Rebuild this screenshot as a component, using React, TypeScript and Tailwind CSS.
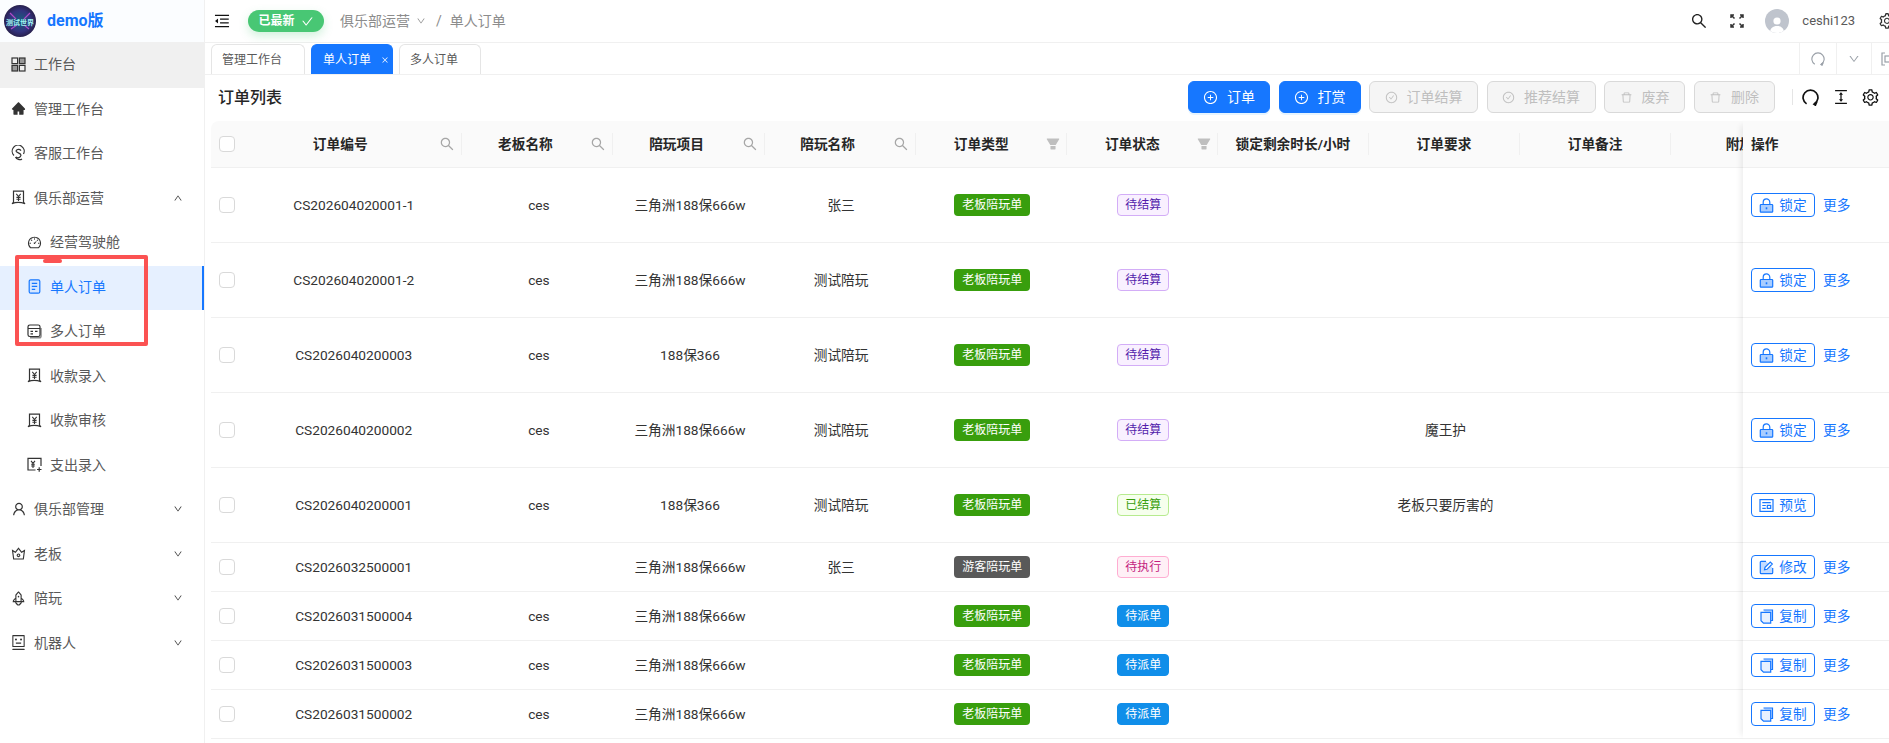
import type { ReactNode } from "react";
import {
  AiFillFilter,
  AiFillHome,
  AiOutlineCheck,
  AiOutlineCheckCircle,
  AiOutlineClose,
  AiOutlineColumnHeight,
  AiOutlineCrown,
  AiOutlineDashboard,
  AiOutlineDelete,
  AiOutlineDown,
  AiOutlineMenuFold,
  AiOutlinePlusCircle,
  AiOutlineRobot,
  AiOutlineRocket,
  AiOutlineSearch,
  AiOutlineSetting,
  AiOutlineUp,
  AiOutlineUser,
} from "react-icons/ai";

const font = "font-['Roboto','Noto_Sans_CJK_SC',sans-serif]";

const GridIcon = () => (
  <svg width="15" height="15" viewBox="0 0 15 15" fill="none" stroke="#333" strokeWidth="1.2">
    <rect x="1" y="1" width="5.6" height="5.6" />
    <rect x="8.4" y="1" width="5.6" height="5.6" fill="#999" />
    <rect x="1" y="8.4" width="5.6" height="5.6" fill="#999" />
    <rect x="8.4" y="8.4" width="5.6" height="5.6" />
  </svg>
);

const ServiceIcon = () => (
  <svg width="15" height="16" viewBox="0 0 15 16" fill="none" stroke="#333" strokeWidth="1.2">
    <path d="M3 10.5A6 6 0 1 1 12.5 9" />
    <path d="M10 5.6A3 3 0 0 0 5 6c0 2 5 1.800 5 4.200a3 3 0 0 1-5 1.800" />
    <path d="M4.500 12c1 2.500 4.500 3.500 6.500 2" />
  </svg>
);

const EnvelopeIcon = () => (
  <svg width="15" height="15" viewBox="0 0 15 15" fill="none" stroke="#333" strokeWidth="1.2">
    <path d="M2.500 1.200h10v11l1.500 1.600c-4-1.600-9.500-1.600-13 0l1.500-1.600z" />
    <path d="M5.300 3.800 7.500 6.500 9.700 3.800M7.500 6.500V11M5.400 7.400h4.200M5.400 9.200h4.200" strokeWidth="1.100" />
  </svg>
);

const PayIcon = () => (
  <svg width="15" height="15" viewBox="0 0 15 15" fill="none" stroke="#333" strokeWidth="1.2">
    <path d="M8.500 13H1V1.300h13V9" />
    <path d="M4 3.800 6 6.300 8 3.800M6 6.300V11M4.200 7.300h3.600M4.200 9h3.600" strokeWidth="1.100" />
    <path d="M10 12.500h4.500M12.200 10.300v4.400" />
  </svg>
);

const FileIcon = () => (
  <svg width="15" height="15" viewBox="0 0 15 15" fill="#d5e6ff" stroke="#1677ff" strokeWidth="1.200">
    <rect x="2.200" y="0.800" width="10.600" height="13.400" rx="1.500" />
    <path d="M4.800 4.300h5.400M4.800 7.300h5.400M4.800 10.300h3.400" fill="none" />
  </svg>
);

const ProfileIcon = () => (
  <svg width="15" height="15" viewBox="0 0 15 15" fill="none" stroke="#333" strokeWidth="1.200">
    <path d="M3 13.800h9.500a1.500 1.500 0 0 0 1.500-1.500V4" stroke="#888" strokeWidth="1.500" />
    <rect x="1" y="1" width="12" height="11.500" rx="1.800" fill="#fff" />
    <path d="M1 4.500h12M3.500 7.300h2.500M8 7.300h2.500M3.500 9.800h2.500" />
  </svg>
);

const ReloadIcon = ({ size, color, width }: { size: number; color: string; width: number }) => (
  <svg width={size} height={size} viewBox="0 0 16 16" fill="none" stroke={color} strokeWidth={width}>
    <path d="M4.300 14A7 7 0 1 1 11.700 14" />
    <path d="M13.900 12.200 11.300 14.300 12.600 15.200z" fill={color} />
  </svg>
);

const FullIcon = () => (
  <svg width="14" height="14" viewBox="0 0 14 14" fill="none" stroke="#333" strokeWidth="1.500">
    <path d="M1 4V1h3M1 1l3.500 3.500M13 4V1h-3M13 1 9.500 4.500M1 10v3h3M1 13l3.500-3.500M13 10v3h-3M13 13 9.500 9.500" />
  </svg>
);

const LockIcon = () => (
  <svg width="15" height="15" viewBox="0 0 15 15" fill="none" stroke="#1677ff" strokeWidth="1.200">
    <path d="M4.200 6.500V4.200a3.300 3.300 0 0 1 6.600 0v2.300" />
    <rect x="1.300" y="6.500" width="12.400" height="7.700" rx="0.800" fill="#a9cdff" />
    <path d="M7.500 9.300v2" strokeWidth="1.600" />
  </svg>
);

const PreviewIcon = () => (
  <svg width="15" height="15" viewBox="0 0 15 15" fill="none" stroke="#1677ff" strokeWidth="1.200">
    <rect x="1" y="1.600" width="13" height="11.800" />
    <path d="M3.300 4.600h8.400M3.300 7.500h3.500M3.300 10.400h3.500" />
    <rect x="8.300" y="7.400" width="3.400" height="3" />
  </svg>
);

const EditIcon = () => (
  <svg width="15" height="15" viewBox="0 0 15 15" fill="none" stroke="#1677ff" strokeWidth="1.200">
    <path d="M7 1.300H2.300a1 1 0 0 0-1 1v10.400a1 1 0 0 0 1 1h10.400a1 1 0 0 0 1-1V8" fill="#c4dcff" />
    <path d="M5.500 9.800 6 7.400 11.300 2 13.300 4 8 9.300z" fill="#fff" />
  </svg>
);

const CopyIcon = () => (
  <svg width="15" height="15" viewBox="0 0 15 15" fill="none" stroke="#1677ff" strokeWidth="1.200">
    <path d="M4.500 1h9v10.500h-1.800" fill="#c4dcff" />
    <path d="M4.500 3.300h7.200v10.900H4.500L2 11.700V3.300z" fill="#e8f1ff" />
  </svg>
);

const Logo = () => (
  <svg width="32" height="32" viewBox="0 0 32 32">
    <defs>
      <radialGradient id="logo-bg" cx="0.500" cy="0.500" r="0.550">
        <stop offset="0" stopColor="#16607c" />
        <stop offset="0.600" stopColor="#33337f" />
        <stop offset="1" stopColor="#241a3e" />
      </radialGradient>
    </defs>
    <circle cx="16" cy="16" r="16" fill="url(#logo-bg)" />
    <path d="M6 8 12 14M26 8l-6 6M7 24l6-4M25 24l-5-4" stroke="#b04bc8" strokeWidth="1.200" />
    <text x="16" y="20" textAnchor="middle" fontSize="7" fontWeight="700" fill="#9ff0ef" fontFamily="'Noto Sans CJK SC',sans-serif">
      测试世界
    </text>
  </svg>
);

type MenuItem = { label: string; icon: ReactNode; sub?: boolean; arrow?: "up" | "down"; active?: boolean; hover?: boolean };

const menu: MenuItem[] = [
  { label: "工作台", icon: <GridIcon />, hover: true },
  { label: "管理工作台", icon: <AiFillHome size={15} color="#333" /> },
  { label: "客服工作台", icon: <ServiceIcon /> },
  { label: "俱乐部运营", icon: <EnvelopeIcon />, arrow: "up" },
  { label: "经营驾驶舱", icon: <AiOutlineDashboard size={15} color="#333" />, sub: true },
  { label: "单人订单", icon: <FileIcon />, sub: true, active: true },
  { label: "多人订单", icon: <ProfileIcon />, sub: true },
  { label: "收款录入", icon: <EnvelopeIcon />, sub: true },
  { label: "收款审核", icon: <EnvelopeIcon />, sub: true },
  { label: "支出录入", icon: <PayIcon />, sub: true },
  { label: "俱乐部管理", icon: <AiOutlineUser size={16} color="#333" className="shrink-0" />, arrow: "down" },
  { label: "老板", icon: <AiOutlineCrown size={17} color="#333" className="shrink-0" />, arrow: "down" },
  { label: "陪玩", icon: <AiOutlineRocket size={17} color="#333" className="shrink-0" />, arrow: "down" },
  { label: "机器人", icon: <AiOutlineRobot size={17} color="#333" className="shrink-0" />, arrow: "down" },
];

const Sidebar = () => (
  <aside className="relative w-[205px] shrink-0 border-r border-[#f0f0f0] bg-white">
    <div className="flex h-[43px] items-center gap-[11px] border-b border-[#f0f0f0] bg-[#fbfdff] pl-1">
      <Logo />
      <span className="text-base font-bold text-[#1677ff]">demo版</span>
    </div>
    {menu.map((item) => (
      <div
        key={item.label}
        className={`flex h-[44.500px] items-center pb-[2px] text-sm ${item.sub ? "pl-[27px]" : "pl-[11px]"} ${
          item.active ? "border-r-2 border-[#1677ff] bg-[#e6f0ff] text-[#1677ff]" : "text-[#595959]"
        } ${item.hover ? "bg-[#f0f0f0]" : ""}`}
      >
        <span className="flex w-[15px] justify-center">{item.icon}</span>
        <span className="ml-[8px]">{item.label}</span>
        {item.arrow === "up" && <AiOutlineUp size={10} color="#333" className="ml-auto mr-[21px]" />}
        {item.arrow === "down" && <AiOutlineDown size={10} color="#333" className="ml-auto mr-[21px]" />}
      </div>
    ))}
    {/* hand-drawn mark on the screenshot */}
    <div className="absolute left-[15px] top-[255px] h-[91px] w-[133px] rounded-[2px] border-4 border-[#fb5252]" />
    <div className="absolute left-[43px] top-[259px] h-[4px] w-[19px] rounded-full bg-[#fb5252]" />
  </aside>
);

const Header = () => (
  <header className="flex h-[43px] items-center border-b border-[#f0f0f0] bg-white">
    <AiOutlineMenuFold size={18} color="#111" className="ml-[8px]" />
    <span className="ml-[17px] flex h-[22px] w-[76px] items-center justify-center gap-[6px] rounded-full bg-[#48c774] text-xs font-bold text-white shadow-[0_4px_10px_rgba(72,199,116,0.25)]">
      已最新
      <AiOutlineCheck size={13} />
    </span>
    <span className="ml-[16px] text-sm text-[#8c8c8c]">俱乐部运营</span>
    <AiOutlineDown size={10} color="#8c8c8c" className="ml-[6px]" />
    <span className="ml-[10px] text-sm text-[#8c8c8c]">/</span>
    <span className="ml-[8px] text-sm text-[#8c8c8c]">单人订单</span>
    <div className="ml-auto flex items-center">
      <AiOutlineSearch size={18} color="#222" />
      <span className="ml-[22px]">
        <FullIcon />
      </span>
      <span className="ml-[21px] flex h-6 w-6 items-end justify-center overflow-hidden rounded-full bg-[#bfc4cd]">
        <svg width="14" height="17" viewBox="0 0 14 17" fill="#fff">
          <circle cx="7" cy="5" r="3.600" />
          <path d="M0 17c0-5 3-7 7-7s7 2 7 7z" />
        </svg>
      </span>
      <span className="ml-[13px] text-[13px] text-[#595959]">ceshi123</span>
      <AiOutlineSetting size={18} color="#333" className="ml-[23px] mr-[-7px]" />
    </div>
  </header>
);

const tabs = [
  { label: "管理工作台", w: "w-[94px] pl-[10px]" },
  { label: "单人订单", w: "w-[82px] pl-[11px]", active: true },
  { label: "多人订单", w: "w-[82px] pl-[10px]" },
];

const TabBar = () => (
  <div className="flex h-[32px] items-end justify-between border-b border-[#f0f0f0] bg-white pl-[6px]">
    <div className="flex gap-[6px]">
      {tabs.map((t) => (
        <div
          key={t.label}
          className={`flex h-[30px] items-center rounded-t-[6px] border border-b-0 text-xs ${t.w} ${
            t.active ? "border-[#1677ff] bg-[#1677ff] text-white" : "border-[#e5e5e5] bg-white text-[#595959]"
          }`}
        >
          {t.label}
          {t.active && <AiOutlineClose size={8} className="ml-[10px]" />}
        </div>
      ))}
    </div>
    <div className="flex h-full items-center">
      <span className="flex h-full w-[37px] items-center justify-center border-l border-[#f0f0f0]">
        <ReloadIcon size={14} color="#9aa0a8" width={1.300} />
      </span>
      <span className="flex h-full w-[35px] items-center justify-center border-l border-[#f0f0f0]">
        <AiOutlineDown size={12} color="#9aa0a8" />
      </span>
      <span className="flex h-full w-[18px] items-center overflow-hidden border-l border-[#f0f0f0] pl-[9px]">
        <svg width="14" height="14" viewBox="0 0 14 14" fill="none" stroke="#9aa0a8" strokeWidth="1.200" className="shrink-0">
          <path d="M4 1H1v12h3M10 1h3v12h-3" />
          <rect x="4" y="4" width="6" height="6" />
        </svg>
      </span>
    </div>
  </div>
);

const ActionButton = ({ label, icon, w, on }: { label: string; icon: ReactNode; w: string; on?: boolean }) => (
  <button
    className={`flex h-8 items-center justify-center gap-[9px] rounded-[6px] border text-sm ${w} ${
      on
        ? "border-[#1677ff] bg-[#1677ff] text-white shadow-[0_2px_0_rgba(5,145,255,0.1)]"
        : "border-[#d9d9d9] bg-[#f5f5f5] text-[#bfbfbf]"
    }`}
  >
    {icon}
    {label}
  </button>
);

const TitleBar = () => (
  <div className="flex h-[46px] items-start justify-between pl-[13px] pr-[9px] pt-[6px]">
    <h2 className="mt-[5px] text-base font-medium text-[#262626]">订单列表</h2>
    <div className="flex items-center">
      <div className="flex items-center gap-[8.500px]">
        <ActionButton on w="w-[82px]" label="订单" icon={<AiOutlinePlusCircle size={15} />} />
        <ActionButton on w="w-[82px]" label="打赏" icon={<AiOutlinePlusCircle size={15} />} />
        <ActionButton w="w-[109px]" label="订单结算" icon={<AiOutlineCheckCircle size={13} />} />
        <ActionButton w="w-[109px]" label="推荐结算" icon={<AiOutlineCheckCircle size={13} />} />
        <ActionButton w="w-[81px]" label="废弃" icon={<AiOutlineDelete size={13} />} />
        <ActionButton w="w-[81px]" label="删除" icon={<AiOutlineDelete size={13} />} />
      </div>
      <span className="ml-[17px] h-[16px] w-px bg-[#e5e5e5]" />
      <span className="ml-[9px]">
        <ReloadIcon size={17} color="#111" width={1.600} />
      </span>
      <AiOutlineColumnHeight size={18} color="#111" className="ml-[13.500px]" />
      <AiOutlineSetting size={19} color="#111" className="ml-[11px]" />
    </div>
  </div>
);

const columns: { label: string; mark?: "search" | "filter" }[] = [
  { label: "老板名称", mark: "search" },
  { label: "陪玩项目", mark: "search" },
  { label: "陪玩名称", mark: "search" },
  { label: "订单类型", mark: "filter" },
  { label: "订单状态", mark: "filter" },
  { label: "锁定剩余时长/小时" },
  { label: "订单要求" },
  { label: "订单备注" },
  { label: "附加费" },
];

type Op = "锁定" | "预览" | "修改" | "复制";
type Status = "待结算" | "已结算" | "待执行" | "待派单";
type Row = {
  id: string;
  boss: string;
  item: string;
  player: string;
  type: string;
  status: Status;
  demand?: string;
  op: Op;
  tall?: boolean;
};

const rows: Row[] = [
  { id: "CS202604020001-1", boss: "ces", item: "三角洲188保666w", player: "张三", type: "老板陪玩单", status: "待结算", op: "锁定", tall: true },
  { id: "CS202604020001-2", boss: "ces", item: "三角洲188保666w", player: "测试陪玩", type: "老板陪玩单", status: "待结算", op: "锁定", tall: true },
  { id: "CS2026040200003", boss: "ces", item: "188保366", player: "测试陪玩", type: "老板陪玩单", status: "待结算", op: "锁定", tall: true },
  { id: "CS2026040200002", boss: "ces", item: "三角洲188保666w", player: "测试陪玩", type: "老板陪玩单", status: "待结算", demand: "魔王护", op: "锁定", tall: true },
  { id: "CS2026040200001", boss: "ces", item: "188保366", player: "测试陪玩", type: "老板陪玩单", status: "已结算", demand: "老板只要厉害的", op: "预览", tall: true },
  { id: "CS2026032500001", boss: "", item: "三角洲188保666w", player: "张三", type: "游客陪玩单", status: "待执行", op: "修改" },
  { id: "CS2026031500004", boss: "ces", item: "三角洲188保666w", player: "", type: "老板陪玩单", status: "待派单", op: "复制" },
  { id: "CS2026031500003", boss: "ces", item: "三角洲188保666w", player: "", type: "老板陪玩单", status: "待派单", op: "复制" },
  { id: "CS2026031500002", boss: "ces", item: "三角洲188保666w", player: "", type: "老板陪玩单", status: "待派单", op: "复制" },
];

const statusStyle: Record<Status, string> = {
  待结算: "border-[#d3adf7] bg-[#f9f0ff] text-[#531dab]",
  已结算: "border-[#b7eb8f] bg-[#f6ffed] text-[#389e0d]",
  待执行: "border-[#ffadd2] bg-[#fff0f6] text-[#c41d7f]",
  待派单: "border-[#108ee9] bg-[#108ee9] text-white",
};

const opIcon: Record<Op, ReactNode> = {
  锁定: <LockIcon />,
  预览: <PreviewIcon />,
  修改: <EditIcon />,
  复制: <CopyIcon />,
};

const Checkbox = () => <span className="h-4 w-4 rounded-[4px] border border-[#d9d9d9] bg-white" />;

const Cell = ({ children }: { children?: ReactNode }) => (
  <div className="flex w-[151.100px] shrink-0 items-center justify-center pl-[2px]">{children}</div>
);

const HeadCell = ({ label, mark, wide }: { label: string; mark?: "search" | "filter"; wide?: boolean }) => (
  <div className={`flex shrink-0 items-center ${wide ? "w-[219.400px]" : "w-[151.100px]"}`}>
    <span className={`flex-1 whitespace-nowrap text-center font-semibold text-[#262626] ${mark === "filter" ? "pl-[5px]" : ""}`}>{label}</span>
    {mark && (
      <span className={`flex w-[24px] justify-end ${mark === "filter" ? "pr-[5px]" : "pr-[6px]"}`}>
        {mark === "search" ? <AiOutlineSearch size={16} color="#a6a6a6" /> : <AiFillFilter size={16} color="#bfbfbf" />}
      </span>
    )}
    <span className="h-[22px] w-px bg-[#f0f0f0]" />
  </div>
);

const Table = () => (
  <div className="ml-[6px] flex text-[13.700px] text-[#333]">
    <div className="min-w-0 flex-1 overflow-hidden">
      <div className="flex h-[47px] items-center rounded-tl-[8px] border-b border-[#f0f0f0] bg-[#fafafa]">
        <div className="flex w-[32px] shrink-0 justify-end pr-[8px]">
          <Checkbox />
        </div>
        <HeadCell wide label="订单编号" mark="search" />
        {columns.map((c) => (
          <HeadCell key={c.label} label={c.label} mark={c.mark} />
        ))}
      </div>
      {rows.map((r) => (
        <div key={r.id} className={`flex border-b border-[#f0f0f0] ${r.tall ? "h-[75px]" : "h-[49px]"}`}>
          <div className="flex w-[32px] shrink-0 items-center justify-end pr-[8px]">
            <Checkbox />
          </div>
          <div className="flex w-[219.400px] shrink-0 items-center justify-center pl-[2px]">{r.id}</div>
          <Cell>{r.boss}</Cell>
          <Cell>{r.item}</Cell>
          <Cell>{r.player}</Cell>
          <Cell>
            <span className={`flex h-[22px] w-[76px] items-center justify-center rounded-[4px] text-xs text-white ${r.type === "游客陪玩单" ? "bg-[#595959]" : "bg-[#389e0d]"}`}>
              {r.type}
            </span>
          </Cell>
          <Cell>
            <span className={`flex h-[22px] w-[52px] items-center justify-center rounded-[4px] border text-xs ${statusStyle[r.status]}`}>
              {r.status}
            </span>
          </Cell>
          <Cell />
          <Cell>{r.demand}</Cell>
          <Cell />
          <Cell />
        </div>
      ))}
    </div>
    <div className="w-[146px] shrink-0 bg-white shadow-[-6px_0_6px_-4px_rgba(0,0,0,0.08)]">
      <div className="flex h-[47px] items-center border-b border-[#f0f0f0] bg-[#fafafa] pl-[8px] font-semibold text-[#262626]">
        操作
      </div>
      {rows.map((r) => (
        <div key={r.id} className={`flex items-center border-b border-[#f0f0f0] pl-[8px] ${r.tall ? "h-[75px]" : "h-[49px]"}`}>
          <span className="flex h-6 w-[64px] items-center justify-center gap-[5px] rounded-[4px] border border-[#1677ff] text-[#1677ff]">
            {opIcon[r.op]}
            {r.op}
          </span>
          {r.op !== "预览" && <span className="ml-[8px] text-[#1677ff]">更多</span>}
        </div>
      ))}
    </div>
  </div>
);

export default function App() {
  return (
    <div className={`flex h-screen overflow-hidden bg-white ${font}`}>
      <Sidebar />
      <main className="flex min-w-0 flex-1 flex-col">
        <Header />
        <TabBar />
        <TitleBar />
        <Table />
      </main>
    </div>
  );
}
